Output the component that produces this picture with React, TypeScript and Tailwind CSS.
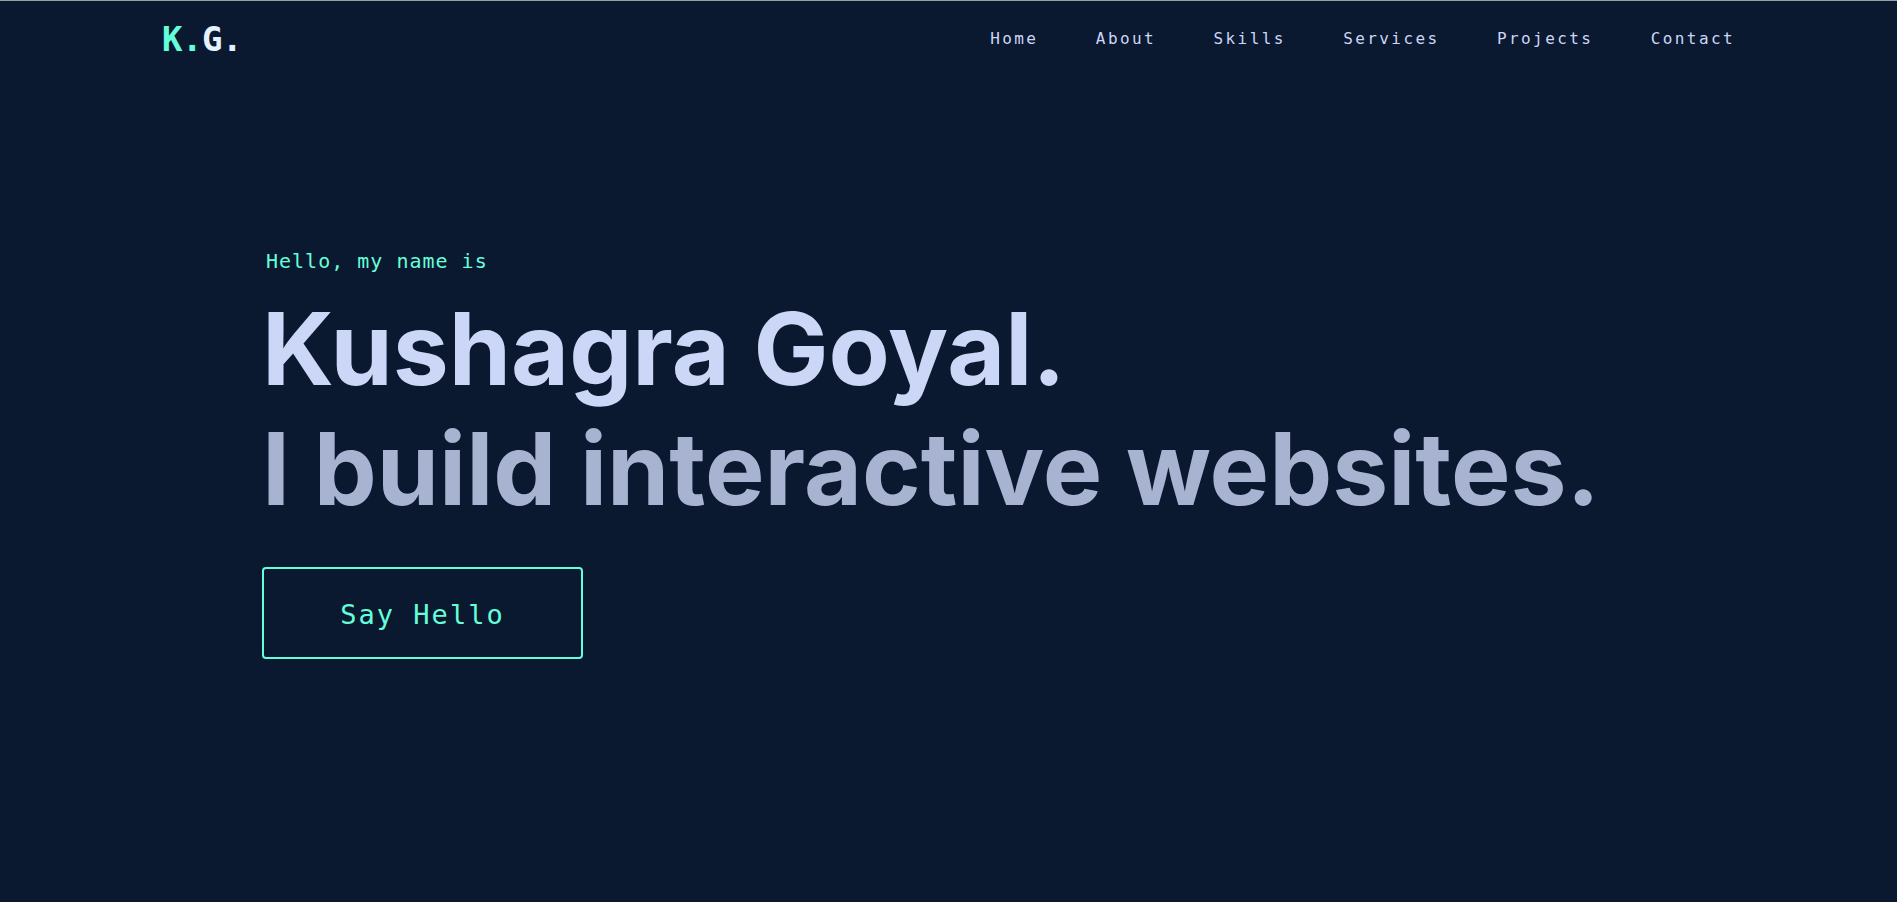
import React from "react";

const mono = "font-['DejaVu_Sans_Mono',monospace]";

export default function App() {
  const links = ["Home", "About", "Skills", "Services", "Projects", "Contact"];
  return (
    <div className="min-h-screen h-[902px] w-full bg-[#0a192f] border-t border-[#9aa0a6] overflow-hidden">
      <header className="h-[75px] flex items-center justify-between pl-[162px] pr-[162px]">
        <div className={`${mono} font-bold text-[34px] leading-[34px] tracking-[-0.5px]`}>
          <span className="text-[#64ffda]">K.</span>
          <span className="text-[#e6f1ff]">G.</span>
        </div>
        <nav className={`${mono} flex items-center gap-[57.5px] text-[16px] leading-[16px] tracking-[2.4px] text-[#ccd6f6]`}>
          {links.map((l) => (
            <a key={l} href="#" className="hover:text-[#64ffda]">
              {l}
            </a>
          ))}
        </nav>
      </header>
      <main className="pl-[262px] pt-[175px]">
        <p className={`${mono} ml-[4px] text-[20px] leading-[20px] tracking-[1px] text-[#64ffda]`}>
          Hello, my name is
        </p>
        <h1 className="mt-[18px] font-['Inter',sans-serif] font-bold text-[100px] leading-[120px] tracking-[0px]">
          <span className="block text-[#ccd6f6]">Kushagra Goyal.</span>
          <span className="block text-[#a8b2d1]">I build interactive websites.</span>
        </h1>
        <button
          className={`${mono} mt-[38px] w-[321px] h-[92px] pt-[4px] border-2 border-[#64ffda] rounded-[4px] text-[27px] tracking-[2px] text-[#64ffda] bg-transparent`}
        >
          Say Hello
        </button>
      </main>
    </div>
  );
}
